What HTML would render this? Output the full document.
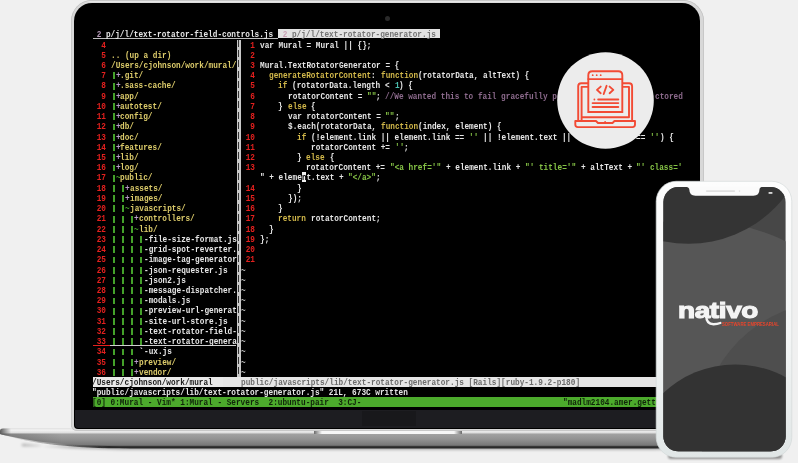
<!DOCTYPE html>
<html><head><meta charset="utf-8">
<style>
html,body{margin:0;padding:0}
body{width:798px;height:463px;position:relative;overflow:hidden;background:#f0f0f0;font-family:"Liberation Sans",sans-serif}
.abs{position:absolute}
.t{position:absolute;font-family:"Liberation Mono",monospace;font-size:9.2px;line-height:10.22px;height:10.22px;white-space:pre;font-weight:bold;transform:scaleX(0.8424);transform-origin:0 0}
#lid{position:absolute;left:71px;top:0px;width:633px;height:431px;border-radius:21px 21px 6px 6px;background:linear-gradient(#cfcfcf,#e6e6e6 1.5px,#d8d8d8 3px,#d8d8d8);box-shadow:inset 0 0 0 0.7px #c2c2c2}
#bezel{position:absolute;left:74.2px;top:3px;width:626px;height:426.2px;border-radius:18px 18px 4px 4px;background:#000;overflow:hidden}
#chin{position:absolute;left:1.2px;top:406.8px;width:623.6px;height:17.8px;background:#1d1d21;border-radius:0 0 3.5px 3.5px}
</style></head><body>

<svg class="abs" style="left:0;top:0" width="798" height="463" viewBox="0 0 798 463">
<defs>
<linearGradient id="gb" x1="0" y1="428.5" x2="0" y2="446" gradientUnits="userSpaceOnUse">
<stop offset="0" stop-color="#d8d8d8"/>
<stop offset="0.08" stop-color="#f4f4f4"/>
<stop offset="0.26" stop-color="#dcdcdc"/>
<stop offset="0.31" stop-color="#a2a2a2"/>
<stop offset="0.6" stop-color="#939393"/>
<stop offset="0.95" stop-color="#787878"/>
<stop offset="1" stop-color="#5a5a5a"/>
</linearGradient>
<linearGradient id="gtip" x1="0" y1="0" x2="11" y2="0" gradientUnits="userSpaceOnUse">
<stop offset="0" stop-color="#5a5a5a"/><stop offset="1" stop-color="#5a5a5a" stop-opacity="0"/>
</linearGradient>
<linearGradient id="gnl" x1="314" y1="0" x2="322" y2="0" gradientUnits="userSpaceOnUse"><stop offset="0" stop-color="#6a6a6a"/><stop offset="1" stop-color="#f7f7f7"/></linearGradient>
<linearGradient id="gnr" x1="454" y1="0" x2="462" y2="0" gradientUnits="userSpaceOnUse"><stop offset="0" stop-color="#f7f7f7"/><stop offset="1" stop-color="#6a6a6a"/></linearGradient>
<filter id="blur1" x="-5%" y="-50%" width="110%" height="200%"><feGaussianBlur stdDeviation="0.55"/></filter>
</defs>
<linearGradient id="gsh" x1="0" y1="0" x2="776" y2="0" gradientUnits="userSpaceOnUse"><stop offset="0" stop-color="#222" stop-opacity="0"/><stop offset="0.06" stop-color="#222" stop-opacity="0.35"/><stop offset="0.14" stop-color="#222" stop-opacity="0.95"/><stop offset="0.86" stop-color="#222" stop-opacity="0.95"/><stop offset="0.94" stop-color="#222" stop-opacity="0.35"/><stop offset="1" stop-color="#222" stop-opacity="0"/></linearGradient>
<linearGradient id="gfd" x1="0" y1="0" x2="776" y2="0" gradientUnits="userSpaceOnUse"><stop offset="0" stop-color="#000" stop-opacity="0.22"/><stop offset="0.08" stop-color="#000" stop-opacity="0"/><stop offset="0.92" stop-color="#000" stop-opacity="0"/><stop offset="1" stop-color="#000" stop-opacity="0.22"/></linearGradient>
<filter id="blur3" x="-5%" y="-100%" width="110%" height="300%"><feGaussianBlur stdDeviation="1.6"/></filter>
<path d="M22,444 C50,447 90,449.5 140,449.5 L636,449.5 C686,449.5 726,447 754,444 L754,446 L22,446 Z" fill="#000" opacity="0.35" filter="url(#blur3)"/>
<path d="M0,434 C30,443.5 70,448.4 130,448.4 L646,448.4 C706,448.4 746,443.5 776,434 Z" fill="url(#gsh)" filter="url(#blur1)"/>
<path d="M0,431 C0,429.3 1,428.5 3,428.5 L773,428.5 C775,428.5 776,429.3 776,431 L776,434 C746,442 706,446.2 646,446.2 L130,446.2 C70,446.2 30,442 0,434 Z" fill="url(#gb)"/>
<path d="M0,433.5 L776,433.5 L776,434 C746,442 706,446.2 646,446.2 L130,446.2 C70,446.2 30,442 0,434 Z" fill="url(#gfd)"/>
<path d="M0,431 C0,429.3 1,428.5 3,428.5 L11,428.5 L11,436 C6,435.5 3,435 0,434 Z" fill="url(#gtip)"/>
<rect x="314" y="428.5" width="148" height="5.5" fill="#f6f6f6"/>
<rect x="314" y="428.5" width="8" height="5.5" fill="url(#gnl)"/>
<rect x="454" y="428.5" width="8" height="5.5" fill="url(#gnr)"/>
</svg>
<div id="lid"></div>
<div id="bezel"><div id="chin"><div class="abs" style="left:286.6px;top:1.6px;width:54px;height:14.3px;background:#18181b"></div></div></div>
<div class="abs" style="left:385px;top:15.5px;width:5px;height:5px;border-radius:50%;background:#2a2a2a"></div>
<div id="term" class="abs" style="left:0;top:0;width:701px;height:463px;overflow:hidden;filter:blur(0.3px)">
<div class="abs" style="left:278px;top:29.3px;width:162px;height:9px;background:#e2e2e2"></div>
<div class="abs" style="left:93px;top:38px;width:185px;height:1px;background:#bdbdbd"></div>
<div class="t" style="left:92.4px;top:29.8px;color:#e6e6e6"> <span style="color:#b69ab8">2</span> p/j/l/text-rotator-field-controls.js</div>
<div class="t" style="left:278.2px;top:29.8px;color:#747474"> <span style="color:#c8a0b4">2</span> p/j/l/text-rotator-generator.js </div>
<div class="abs" style="left:236.5px;top:39.5px;width:4.65px;height:337.2px;background:#c8c8c8"></div>
<div class="abs" style="left:238.3px;top:39.5px;width:1.2px;height:337.2px;background:repeating-linear-gradient(#333 0 7px,transparent 7px 10.22px)"></div>
<div class="abs" style="left:93px;top:345px;width:17px;height:1px;background:#e4201e"></div>
<div class="abs" style="left:110px;top:345px;width:126px;height:1px;background:#d0d0d0"></div>
<div class="t" style="left:92.40px;top:40.50px;color:#e4201e;">  4</div>
<div class="t" style="left:92.40px;top:50.73px;color:#e4201e;">  5</div>
<div class="t" style="left:111.00px;top:50.73px;color:#dccb6a;">.. (up a dir)</div>
<div class="t" style="left:92.40px;top:60.96px;color:#e4201e;">  6</div>
<div class="t" style="left:111.00px;top:60.96px;color:#dccb6a;">/Users/cjohnson/work/mural/</div>
<div class="t" style="left:92.40px;top:71.19px;color:#e4201e;">  7</div>
<div class="abs" style="left:113px;top:72.49px;width:1.5px;height:6.8px;background:#44a02a"></div>
<div class="t" style="left:115.65px;top:71.19px;color:#b89cc8;">+</div>
<div class="t" style="left:120.30px;top:71.19px;color:#dccb6a;">.git/</div>
<div class="t" style="left:92.40px;top:81.42px;color:#e4201e;">  8</div>
<div class="abs" style="left:113px;top:82.72px;width:1.5px;height:6.8px;background:#44a02a"></div>
<div class="t" style="left:115.65px;top:81.42px;color:#b89cc8;">+</div>
<div class="t" style="left:120.30px;top:81.42px;color:#dccb6a;">.sass-cache/</div>
<div class="t" style="left:92.40px;top:91.65px;color:#e4201e;">  9</div>
<div class="abs" style="left:113px;top:92.95px;width:1.5px;height:6.8px;background:#44a02a"></div>
<div class="t" style="left:115.65px;top:91.65px;color:#b89cc8;">+</div>
<div class="t" style="left:120.30px;top:91.65px;color:#dccb6a;">app/</div>
<div class="t" style="left:92.40px;top:101.88px;color:#e4201e;"> 10</div>
<div class="abs" style="left:113px;top:103.18px;width:1.5px;height:6.8px;background:#44a02a"></div>
<div class="t" style="left:115.65px;top:101.88px;color:#b89cc8;">+</div>
<div class="t" style="left:120.30px;top:101.88px;color:#dccb6a;">autotest/</div>
<div class="t" style="left:92.40px;top:112.11px;color:#e4201e;"> 11</div>
<div class="abs" style="left:113px;top:113.41px;width:1.5px;height:6.8px;background:#44a02a"></div>
<div class="t" style="left:115.65px;top:112.11px;color:#b89cc8;">+</div>
<div class="t" style="left:120.30px;top:112.11px;color:#dccb6a;">config/</div>
<div class="t" style="left:92.40px;top:122.34px;color:#e4201e;"> 12</div>
<div class="abs" style="left:113px;top:123.64px;width:1.5px;height:6.8px;background:#44a02a"></div>
<div class="t" style="left:115.65px;top:122.34px;color:#b89cc8;">+</div>
<div class="t" style="left:120.30px;top:122.34px;color:#dccb6a;">db/</div>
<div class="t" style="left:92.40px;top:132.57px;color:#e4201e;"> 13</div>
<div class="abs" style="left:113px;top:133.87px;width:1.5px;height:6.8px;background:#44a02a"></div>
<div class="t" style="left:115.65px;top:132.57px;color:#b89cc8;">+</div>
<div class="t" style="left:120.30px;top:132.57px;color:#dccb6a;">doc/</div>
<div class="t" style="left:92.40px;top:142.80px;color:#e4201e;"> 14</div>
<div class="abs" style="left:113px;top:144.10px;width:1.5px;height:6.8px;background:#44a02a"></div>
<div class="t" style="left:115.65px;top:142.80px;color:#b89cc8;">+</div>
<div class="t" style="left:120.30px;top:142.80px;color:#dccb6a;">features/</div>
<div class="t" style="left:92.40px;top:153.03px;color:#e4201e;"> 15</div>
<div class="abs" style="left:113px;top:154.33px;width:1.5px;height:6.8px;background:#44a02a"></div>
<div class="t" style="left:115.65px;top:153.03px;color:#b89cc8;">+</div>
<div class="t" style="left:120.30px;top:153.03px;color:#dccb6a;">lib/</div>
<div class="t" style="left:92.40px;top:163.26px;color:#e4201e;"> 16</div>
<div class="abs" style="left:113px;top:164.56px;width:1.5px;height:6.8px;background:#44a02a"></div>
<div class="t" style="left:115.65px;top:163.26px;color:#b89cc8;">+</div>
<div class="t" style="left:120.30px;top:163.26px;color:#dccb6a;">log/</div>
<div class="t" style="left:92.40px;top:173.49px;color:#e4201e;"> 17</div>
<div class="abs" style="left:113px;top:174.79px;width:1.5px;height:6.8px;background:#44a02a"></div>
<div class="t" style="left:115.65px;top:173.49px;color:#4aa42c;">~</div>
<div class="t" style="left:120.30px;top:173.49px;color:#dccb6a;">public/</div>
<div class="t" style="left:92.40px;top:183.72px;color:#e4201e;"> 18</div>
<div class="abs" style="left:113px;top:185.02px;width:1.5px;height:6.8px;background:#44a02a"></div>
<div class="abs" style="left:122px;top:185.02px;width:1.5px;height:6.8px;background:#44a02a"></div>
<div class="t" style="left:124.95px;top:183.72px;color:#b89cc8;">+</div>
<div class="t" style="left:129.60px;top:183.72px;color:#dccb6a;">assets/</div>
<div class="t" style="left:92.40px;top:193.95px;color:#e4201e;"> 19</div>
<div class="abs" style="left:113px;top:195.25px;width:1.5px;height:6.8px;background:#44a02a"></div>
<div class="abs" style="left:122px;top:195.25px;width:1.5px;height:6.8px;background:#44a02a"></div>
<div class="t" style="left:124.95px;top:193.95px;color:#b89cc8;">+</div>
<div class="t" style="left:129.60px;top:193.95px;color:#dccb6a;">images/</div>
<div class="t" style="left:92.40px;top:204.18px;color:#e4201e;"> 20</div>
<div class="abs" style="left:113px;top:205.48px;width:1.5px;height:6.8px;background:#44a02a"></div>
<div class="abs" style="left:122px;top:205.48px;width:1.5px;height:6.8px;background:#44a02a"></div>
<div class="t" style="left:124.95px;top:204.18px;color:#4aa42c;">~</div>
<div class="t" style="left:129.60px;top:204.18px;color:#dccb6a;">javascripts/</div>
<div class="t" style="left:92.40px;top:214.41px;color:#e4201e;"> 21</div>
<div class="abs" style="left:113px;top:215.71px;width:1.5px;height:6.8px;background:#44a02a"></div>
<div class="abs" style="left:122px;top:215.71px;width:1.5px;height:6.8px;background:#44a02a"></div>
<div class="abs" style="left:131px;top:215.71px;width:1.5px;height:6.8px;background:#44a02a"></div>
<div class="t" style="left:134.25px;top:214.41px;color:#b89cc8;">+</div>
<div class="t" style="left:138.90px;top:214.41px;color:#dccb6a;">controllers/</div>
<div class="t" style="left:92.40px;top:224.64px;color:#e4201e;"> 22</div>
<div class="abs" style="left:113px;top:225.94px;width:1.5px;height:6.8px;background:#44a02a"></div>
<div class="abs" style="left:122px;top:225.94px;width:1.5px;height:6.8px;background:#44a02a"></div>
<div class="abs" style="left:131px;top:225.94px;width:1.5px;height:6.8px;background:#44a02a"></div>
<div class="t" style="left:134.25px;top:224.64px;color:#4aa42c;">~</div>
<div class="t" style="left:138.90px;top:224.64px;color:#dccb6a;">lib/</div>
<div class="t" style="left:92.40px;top:234.87px;color:#e4201e;"> 23</div>
<div class="abs" style="left:113px;top:236.17px;width:1.5px;height:6.8px;background:#44a02a"></div>
<div class="abs" style="left:122px;top:236.17px;width:1.5px;height:6.8px;background:#44a02a"></div>
<div class="abs" style="left:131px;top:236.17px;width:1.5px;height:6.8px;background:#44a02a"></div>
<div class="abs" style="left:140px;top:236.17px;width:1.5px;height:6.8px;background:#44a02a"></div>
<div class="t" style="left:143.55px;top:234.87px;color:#e6e6e6;">-file-size-format.js</div>
<div class="t" style="left:92.40px;top:245.10px;color:#e4201e;"> 24</div>
<div class="abs" style="left:113px;top:246.40px;width:1.5px;height:6.8px;background:#44a02a"></div>
<div class="abs" style="left:122px;top:246.40px;width:1.5px;height:6.8px;background:#44a02a"></div>
<div class="abs" style="left:131px;top:246.40px;width:1.5px;height:6.8px;background:#44a02a"></div>
<div class="abs" style="left:140px;top:246.40px;width:1.5px;height:6.8px;background:#44a02a"></div>
<div class="t" style="left:143.55px;top:245.10px;color:#e6e6e6;">-grid-spot-reverter.</div>
<div class="t" style="left:92.40px;top:255.33px;color:#e4201e;"> 25</div>
<div class="abs" style="left:113px;top:256.63px;width:1.5px;height:6.8px;background:#44a02a"></div>
<div class="abs" style="left:122px;top:256.63px;width:1.5px;height:6.8px;background:#44a02a"></div>
<div class="abs" style="left:131px;top:256.63px;width:1.5px;height:6.8px;background:#44a02a"></div>
<div class="abs" style="left:140px;top:256.63px;width:1.5px;height:6.8px;background:#44a02a"></div>
<div class="t" style="left:143.55px;top:255.33px;color:#e6e6e6;">-image-tag-generator</div>
<div class="t" style="left:92.40px;top:265.56px;color:#e4201e;"> 26</div>
<div class="abs" style="left:113px;top:266.86px;width:1.5px;height:6.8px;background:#44a02a"></div>
<div class="abs" style="left:122px;top:266.86px;width:1.5px;height:6.8px;background:#44a02a"></div>
<div class="abs" style="left:131px;top:266.86px;width:1.5px;height:6.8px;background:#44a02a"></div>
<div class="abs" style="left:140px;top:266.86px;width:1.5px;height:6.8px;background:#44a02a"></div>
<div class="t" style="left:143.55px;top:265.56px;color:#e6e6e6;">-json-requester.js</div>
<div class="t" style="left:92.40px;top:275.79px;color:#e4201e;"> 27</div>
<div class="abs" style="left:113px;top:277.09px;width:1.5px;height:6.8px;background:#44a02a"></div>
<div class="abs" style="left:122px;top:277.09px;width:1.5px;height:6.8px;background:#44a02a"></div>
<div class="abs" style="left:131px;top:277.09px;width:1.5px;height:6.8px;background:#44a02a"></div>
<div class="abs" style="left:140px;top:277.09px;width:1.5px;height:6.8px;background:#44a02a"></div>
<div class="t" style="left:143.55px;top:275.79px;color:#e6e6e6;">-json2.js</div>
<div class="t" style="left:92.40px;top:286.02px;color:#e4201e;"> 28</div>
<div class="abs" style="left:113px;top:287.32px;width:1.5px;height:6.8px;background:#44a02a"></div>
<div class="abs" style="left:122px;top:287.32px;width:1.5px;height:6.8px;background:#44a02a"></div>
<div class="abs" style="left:131px;top:287.32px;width:1.5px;height:6.8px;background:#44a02a"></div>
<div class="abs" style="left:140px;top:287.32px;width:1.5px;height:6.8px;background:#44a02a"></div>
<div class="t" style="left:143.55px;top:286.02px;color:#e6e6e6;">-message-dispatcher.</div>
<div class="t" style="left:92.40px;top:296.25px;color:#e4201e;"> 29</div>
<div class="abs" style="left:113px;top:297.55px;width:1.5px;height:6.8px;background:#44a02a"></div>
<div class="abs" style="left:122px;top:297.55px;width:1.5px;height:6.8px;background:#44a02a"></div>
<div class="abs" style="left:131px;top:297.55px;width:1.5px;height:6.8px;background:#44a02a"></div>
<div class="abs" style="left:140px;top:297.55px;width:1.5px;height:6.8px;background:#44a02a"></div>
<div class="t" style="left:143.55px;top:296.25px;color:#e6e6e6;">-modals.js</div>
<div class="t" style="left:92.40px;top:306.48px;color:#e4201e;"> 30</div>
<div class="abs" style="left:113px;top:307.78px;width:1.5px;height:6.8px;background:#44a02a"></div>
<div class="abs" style="left:122px;top:307.78px;width:1.5px;height:6.8px;background:#44a02a"></div>
<div class="abs" style="left:131px;top:307.78px;width:1.5px;height:6.8px;background:#44a02a"></div>
<div class="abs" style="left:140px;top:307.78px;width:1.5px;height:6.8px;background:#44a02a"></div>
<div class="t" style="left:143.55px;top:306.48px;color:#e6e6e6;">-preview-url-generat</div>
<div class="t" style="left:92.40px;top:316.71px;color:#e4201e;"> 31</div>
<div class="abs" style="left:113px;top:318.01px;width:1.5px;height:6.8px;background:#44a02a"></div>
<div class="abs" style="left:122px;top:318.01px;width:1.5px;height:6.8px;background:#44a02a"></div>
<div class="abs" style="left:131px;top:318.01px;width:1.5px;height:6.8px;background:#44a02a"></div>
<div class="abs" style="left:140px;top:318.01px;width:1.5px;height:6.8px;background:#44a02a"></div>
<div class="t" style="left:143.55px;top:316.71px;color:#e6e6e6;">-site-url-store.js</div>
<div class="t" style="left:92.40px;top:326.94px;color:#e4201e;"> 32</div>
<div class="abs" style="left:113px;top:328.24px;width:1.5px;height:6.8px;background:#44a02a"></div>
<div class="abs" style="left:122px;top:328.24px;width:1.5px;height:6.8px;background:#44a02a"></div>
<div class="abs" style="left:131px;top:328.24px;width:1.5px;height:6.8px;background:#44a02a"></div>
<div class="abs" style="left:140px;top:328.24px;width:1.5px;height:6.8px;background:#44a02a"></div>
<div class="t" style="left:143.55px;top:326.94px;color:#e6e6e6;">-text-rotator-field-</div>
<div class="t" style="left:92.40px;top:337.17px;color:#e4201e;"> 33</div>
<div class="abs" style="left:113px;top:338.47px;width:1.5px;height:6.8px;background:#44a02a"></div>
<div class="abs" style="left:122px;top:338.47px;width:1.5px;height:6.8px;background:#44a02a"></div>
<div class="abs" style="left:131px;top:338.47px;width:1.5px;height:6.8px;background:#44a02a"></div>
<div class="abs" style="left:140px;top:338.47px;width:1.5px;height:6.8px;background:#44a02a"></div>
<div class="t" style="left:143.55px;top:337.17px;color:#e6e6e6;">-text-rotator-genera</div>
<div class="t" style="left:92.40px;top:347.40px;color:#e4201e;"> 34</div>
<div class="abs" style="left:113px;top:348.70px;width:1.5px;height:6.8px;background:#44a02a"></div>
<div class="abs" style="left:122px;top:348.70px;width:1.5px;height:6.8px;background:#44a02a"></div>
<div class="abs" style="left:131px;top:348.70px;width:1.5px;height:6.8px;background:#44a02a"></div>
<div class="t" style="left:138.90px;top:347.40px;color:#e6e6e6;">`</div>
<div class="t" style="left:143.55px;top:347.40px;color:#e6e6e6;">-ux.js</div>
<div class="t" style="left:92.40px;top:357.63px;color:#e4201e;"> 35</div>
<div class="abs" style="left:113px;top:358.93px;width:1.5px;height:6.8px;background:#44a02a"></div>
<div class="abs" style="left:122px;top:358.93px;width:1.5px;height:6.8px;background:#44a02a"></div>
<div class="abs" style="left:131px;top:358.93px;width:1.5px;height:6.8px;background:#44a02a"></div>
<div class="t" style="left:134.25px;top:357.63px;color:#b89cc8;">+</div>
<div class="t" style="left:138.90px;top:357.63px;color:#dccb6a;">preview/</div>
<div class="t" style="left:92.40px;top:367.86px;color:#e4201e;"> 36</div>
<div class="abs" style="left:113px;top:369.16px;width:1.5px;height:6.8px;background:#44a02a"></div>
<div class="abs" style="left:122px;top:369.16px;width:1.5px;height:6.8px;background:#44a02a"></div>
<div class="abs" style="left:131px;top:369.16px;width:1.5px;height:6.8px;background:#44a02a"></div>
<div class="t" style="left:134.25px;top:367.86px;color:#b89cc8;">+</div>
<div class="t" style="left:138.90px;top:367.86px;color:#dccb6a;">vendor/</div>
<div class="t" style="left:241.20px;top:40.50px;color:#e4201e;">  1</div>
<div class="t" style="left:259.80px;top:40.50px;color:#e6e6e6;">var Mural = Mural || {};</div>
<div class="t" style="left:241.20px;top:50.73px;color:#e4201e;">  2</div>
<div class="t" style="left:241.20px;top:60.96px;color:#e4201e;">  3</div>
<div class="t" style="left:259.80px;top:60.96px;color:#e6e6e6;">Mural.TextRotatorGenerator = {</div>
<div class="t" style="left:241.20px;top:71.19px;color:#e4201e;">  4</div>
<div class="t" style="left:269.10px;top:71.19px;color:#d2b84a;">generateRotatorContent</div>
<div class="t" style="left:371.40px;top:71.19px;color:#e6e6e6;">:</div>
<div class="t" style="left:380.70px;top:71.19px;color:#d2b84a;">function</div>
<div class="t" style="left:417.90px;top:71.19px;color:#e6e6e6;">(rotatorData, altText) {</div>
<div class="t" style="left:241.20px;top:81.42px;color:#e4201e;">  5</div>
<div class="t" style="left:278.40px;top:81.42px;color:#d2b84a;">if</div>
<div class="t" style="left:292.35px;top:81.42px;color:#e6e6e6;">(rotatorData.length &lt; </div>
<div class="t" style="left:394.65px;top:81.42px;color:#4cc0b0;">1</div>
<div class="t" style="left:399.30px;top:81.42px;color:#e6e6e6;">) {</div>
<div class="t" style="left:241.20px;top:91.65px;color:#e4201e;">  6</div>
<div class="t" style="left:287.70px;top:91.65px;color:#e6e6e6;">rotatorContent = </div>
<div class="t" style="left:366.75px;top:91.65px;color:#86c446;">&quot;&quot;</div>
<div class="t" style="left:376.05px;top:91.65px;color:#e6e6e6;">; </div>
<div class="t" style="left:385.35px;top:91.65px;color:#8c6a8c;">//We wanted this to fail gracefully p</div>
<div class="t" style="left:655.05px;top:91.65px;color:#8c6a8c;">ctored</div>
<div class="t" style="left:241.20px;top:101.88px;color:#e4201e;">  7</div>
<div class="t" style="left:278.40px;top:101.88px;color:#e6e6e6;">} </div>
<div class="t" style="left:287.70px;top:101.88px;color:#d2b84a;">else</div>
<div class="t" style="left:310.95px;top:101.88px;color:#e6e6e6;">{</div>
<div class="t" style="left:241.20px;top:112.11px;color:#e4201e;">  8</div>
<div class="t" style="left:287.70px;top:112.11px;color:#e6e6e6;">var rotatorContent = </div>
<div class="t" style="left:385.35px;top:112.11px;color:#86c446;">&quot;&quot;</div>
<div class="t" style="left:394.65px;top:112.11px;color:#e6e6e6;">;</div>
<div class="t" style="left:241.20px;top:122.34px;color:#e4201e;">  9</div>
<div class="t" style="left:287.70px;top:122.34px;color:#e6e6e6;">$.each(rotatorData, </div>
<div class="t" style="left:380.70px;top:122.34px;color:#d2b84a;">function</div>
<div class="t" style="left:417.90px;top:122.34px;color:#e6e6e6;">(index, element) {</div>
<div class="t" style="left:241.20px;top:132.57px;color:#e4201e;"> 10</div>
<div class="t" style="left:297.00px;top:132.57px;color:#d2b84a;">if</div>
<div class="t" style="left:310.95px;top:132.57px;color:#e6e6e6;">(!element.link || element.link == </div>
<div class="t" style="left:469.05px;top:132.57px;color:#86c446;">&#x27;&#x27;</div>
<div class="t" style="left:483.00px;top:132.57px;color:#e6e6e6;">|| !element.text ||</div>
<div class="t" style="left:636.45px;top:132.57px;color:#e6e6e6;">== </div>
<div class="t" style="left:650.40px;top:132.57px;color:#86c446;">&#x27;&#x27;</div>
<div class="t" style="left:659.70px;top:132.57px;color:#e6e6e6;">) {</div>
<div class="t" style="left:241.20px;top:142.80px;color:#e4201e;"> 11</div>
<div class="t" style="left:310.95px;top:142.80px;color:#e6e6e6;">rotatorContent += </div>
<div class="t" style="left:394.65px;top:142.80px;color:#86c446;">&#x27;&#x27;</div>
<div class="t" style="left:403.95px;top:142.80px;color:#e6e6e6;">;</div>
<div class="t" style="left:241.20px;top:153.03px;color:#e4201e;"> 12</div>
<div class="t" style="left:297.00px;top:153.03px;color:#e6e6e6;">} </div>
<div class="t" style="left:306.30px;top:153.03px;color:#d2b84a;">else</div>
<div class="t" style="left:329.55px;top:153.03px;color:#e6e6e6;">{</div>
<div class="t" style="left:241.20px;top:163.26px;color:#e4201e;"> 13</div>
<div class="t" style="left:306.30px;top:163.26px;color:#e6e6e6;">rotatorContent += </div>
<div class="t" style="left:390.00px;top:163.26px;color:#86c446;">&quot;&lt;a href=&#x27;&quot;</div>
<div class="t" style="left:445.80px;top:163.26px;color:#e6e6e6;">+ element.link + </div>
<div class="t" style="left:524.85px;top:163.26px;color:#86c446;">&quot;&#x27; title=&#x27;&quot;</div>
<div class="t" style="left:580.65px;top:163.26px;color:#e6e6e6;">+ altText + </div>
<div class="t" style="left:636.45px;top:163.26px;color:#86c446;">&quot;&#x27; class=&#x27;</div>
<div class="t" style="left:259.80px;top:173.49px;color:#e6e6e6;">&quot; + element.text + </div>
<div class="t" style="left:348.15px;top:173.49px;color:#86c446;">&quot;&lt;/a&gt;&quot;</div>
<div class="t" style="left:376.05px;top:173.49px;color:#e6e6e6;">;</div>
<div class="t" style="left:241.20px;top:183.72px;color:#e4201e;"> 14</div>
<div class="t" style="left:297.00px;top:183.72px;color:#e6e6e6;">}</div>
<div class="t" style="left:241.20px;top:193.95px;color:#e4201e;"> 15</div>
<div class="t" style="left:287.70px;top:193.95px;color:#e6e6e6;">});</div>
<div class="t" style="left:241.20px;top:204.18px;color:#e4201e;"> 16</div>
<div class="t" style="left:278.40px;top:204.18px;color:#e6e6e6;">}</div>
<div class="t" style="left:241.20px;top:214.41px;color:#e4201e;"> 17</div>
<div class="t" style="left:278.40px;top:214.41px;color:#d2b84a;">return</div>
<div class="t" style="left:310.95px;top:214.41px;color:#e6e6e6;">rotatorContent;</div>
<div class="t" style="left:241.20px;top:224.64px;color:#e4201e;"> 18</div>
<div class="t" style="left:269.10px;top:224.64px;color:#e6e6e6;">}</div>
<div class="t" style="left:241.20px;top:234.87px;color:#e4201e;"> 19</div>
<div class="t" style="left:259.80px;top:234.87px;color:#e6e6e6;">};</div>
<div class="t" style="left:241.20px;top:245.10px;color:#e4201e;"> 20</div>
<div class="t" style="left:241.20px;top:255.33px;color:#e4201e;"> 21</div>
<div class="t" style="left:241.20px;top:265.56px;color:#c4c4c4;">~</div>
<div class="t" style="left:241.20px;top:275.79px;color:#c4c4c4;">~</div>
<div class="t" style="left:241.20px;top:286.02px;color:#c4c4c4;">~</div>
<div class="t" style="left:241.20px;top:296.25px;color:#c4c4c4;">~</div>
<div class="t" style="left:241.20px;top:306.48px;color:#c4c4c4;">~</div>
<div class="t" style="left:241.20px;top:316.71px;color:#c4c4c4;">~</div>
<div class="t" style="left:241.20px;top:326.94px;color:#c4c4c4;">~</div>
<div class="t" style="left:241.20px;top:337.17px;color:#c4c4c4;">~</div>
<div class="t" style="left:241.20px;top:347.40px;color:#c4c4c4;">~</div>
<div class="t" style="left:241.20px;top:357.63px;color:#c4c4c4;">~</div>
<div class="t" style="left:241.20px;top:367.86px;color:#c4c4c4;">~</div>
<div class="abs" style="left:301.65px;top:172.4px;width:4.6px;height:10px;background:#f0f0f0"></div>
<div class="t" style="left:301.65px;top:173.49px;color:#000;">n</div>
<div class="abs" style="left:93px;top:376.9px;width:608px;height:10px;background:#e6e6e6"></div>
<div class="abs" style="left:93px;top:376.9px;width:130px;height:10px;background:#e9e9e9"></div>
<div class="t" style="left:92.4px;top:377.5px;color:#1a1a1a">/Users/cjohnson/work/mural</div>
<div class="t" style="left:241.20px;top:377.5px;color:#6c6c6c">public/javascripts/lib/text-rotator-generator.js [Rails][ruby-1.9.2-p180]</div>
<div class="t" style="left:92.4px;top:387.9px;color:#e6e6e6">"public/javascripts/lib/text-rotator-generator.js" 21L, 673C written</div>
<div class="abs" style="left:93px;top:397.2px;width:608px;height:10.1px;background:#4caa2c"></div>
<div class="t" style="left:92.4px;top:398px;color:#10240a">[0] 0:Mural - Vim* 1:Mural - Servers  2:ubuntu-pair  3:CJ-</div>
<div class="t" style="left:563.3px;top:398px;color:#10240a">"madlm2104.amer.getty</div>
</div>

<svg class="abs" style="left:0;top:0" width="798" height="463" viewBox="0 0 798 463">
<circle cx="605.5" cy="100.5" r="48.3" fill="#ececec"/>
<g fill="none" stroke="#f24a34" stroke-width="1.9" stroke-linejoin="round" stroke-linecap="round">
<path d="M578.2,121 L578.2,86.3 Q578.2,83.3 581.2,83.3 L629.1,83.3 Q632.1,83.3 632.1,86.3 L632.1,121"/>
<path d="M581.6,121 L581.6,86.9 L629,86.9 L629,117.2 L581.6,117.2"/>
<path d="M575.3,121 L596,121 L598,123 L612.5,123 L614.5,121 L635,121 L635,124.6 Q635,127.1 632.5,127.1 L577.8,127.1 Q575.3,127.1 575.3,124.6 Z"/>
</g>
<circle cx="605.1" cy="121.9" r="0.9" fill="#f24a34"/>
<path d="M588.3,112 L588.3,75.2 Q588.3,71.2 592.3,71.2 L618.3,71.2 Q622.3,71.2 622.3,75.2 L622.3,112 Z" fill="#ececec" stroke="#f24a34" stroke-width="1.9"/>
<g fill="none" stroke="#f24a34" stroke-width="1.9" stroke-linecap="round" stroke-linejoin="round">
<path d="M588.3,79.1 L622.3,79.1"/>
<path d="M600.7,86.6 L597,89.9 L600.7,93.2"/>
<path d="M609.6,86.6 L613.3,89.9 L609.6,93.2"/>
<path d="M606.6,85.8 L603.7,94"/>
<path d="M598.2,99.5 L618.3,99.5"/>
<path d="M592.6,103.1 L618.3,103.1"/>
<path d="M592.6,107 L618.3,107"/>
</g>
<g fill="#f24a34"><circle cx="592.7" cy="75.2" r="0.9"/><circle cx="596.7" cy="75.2" r="0.9"/><circle cx="600.7" cy="75.2" r="0.9"/><circle cx="594.4" cy="99.5" r="0.9"/></g>
</svg>

<svg class="abs" style="left:0;top:0" width="798" height="463" viewBox="0 0 798 463">
<defs>
<clipPath id="scr"><rect x="663.4" y="187" width="122.2" height="264.3" rx="15" ry="15"/></clipPath>
<filter id="pblur" x="-20%" y="-50%" width="140%" height="200%"><feGaussianBlur stdDeviation="1.2"/></filter>
</defs>
<linearGradient id="gfr" x1="0" y1="181" x2="0" y2="458" gradientUnits="userSpaceOnUse"><stop offset="0" stop-color="#fdfdfd"/><stop offset="0.55" stop-color="#f4f6f6"/><stop offset="1" stop-color="#e0e6e6"/></linearGradient>
<rect x="668" y="453" width="114" height="6" rx="3" fill="#000" opacity="0.4" filter="url(#pblur)"/>
<rect x="656.2" y="181.3" width="135.6" height="276" rx="20" ry="20" fill="url(#gfr)" stroke="#d4dada" stroke-width="0.7"/>
<g clip-path="url(#scr)">
<rect x="663" y="186" width="124" height="266" fill="#474747"/>
<circle cx="692.3" cy="432.1" r="212.4" fill="#565656"/>
<circle cx="832" cy="433.3" r="131.3" fill="#4e4e4e"/>
<circle cx="688.4" cy="121.8" r="122" fill="#343434"/>
<circle cx="735.3" cy="469.1" r="104.7" fill="#333333"/>
</g>
<path d="M684,186.5 Q689.4,186.5 689.4,190 Q689.4,195.7 695.4,195.7 L753.4,195.7 Q759.4,195.7 759.4,190 Q759.4,186.5 764.8,186.5 Z" fill="#fbfbfb"/>
<rect x="705.8" y="190.3" width="29.4" height="1.6" rx="0.8" fill="#e0e0e0"/>
<circle cx="739.5" cy="191.1" r="0.8" fill="#e0e0e0"/>
<rect x="768.6" y="192.2" width="3.8" height="1.5" fill="#fff"/>
</svg>

<div class="abs" style="left:677.8px;top:300.3px;font-family:'Liberation Sans',sans-serif;font-weight:bold;font-size:22px;line-height:22px;color:#f4f4f4;-webkit-text-stroke:1.1px #f4f4f4;letter-spacing:-0.3px;transform:scaleX(1.27);transform-origin:0 0;white-space:pre">nativo</div>
<svg class="abs" style="left:0;top:0" width="798" height="463"><path d="M706.2,315 C706.2,321.5 709,324.2 713.5,324.2 C716.5,324.2 718.8,323.6 720.3,323" fill="none" stroke="#f4f4f4" stroke-width="2.4" stroke-linecap="round"/></svg>
<div class="abs" style="left:722px;top:321.6px;font-family:'Liberation Sans',sans-serif;font-weight:bold;font-size:5px;line-height:5px;color:#e8452c;white-space:pre;transform:scaleX(0.86);transform-origin:0 0">SOFTWARE EMPRESARIAL</div>

</body></html>
